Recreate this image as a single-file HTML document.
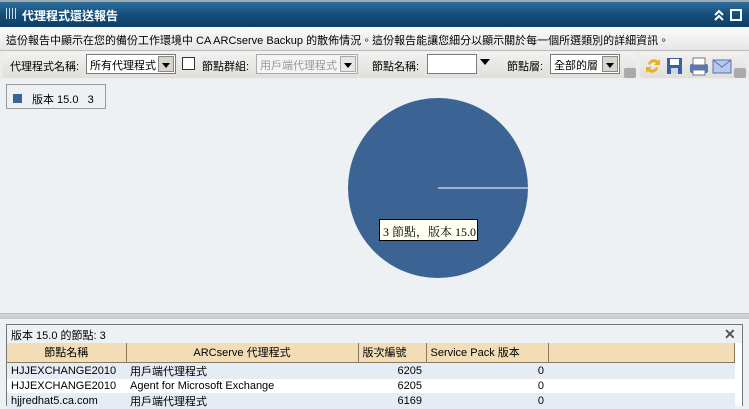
<!DOCTYPE html>
<html><head><meta charset="utf-8"><style>
*{box-sizing:border-box;margin:0;padding:0}
body{width:749px;height:406px;overflow:hidden;background:#eef1f3;font-family:"Liberation Sans","Noto Sans CJK TC",sans-serif;font-size:11px;color:#000;position:relative}
.abs{position:absolute}
.title{left:0;top:0;width:749px;height:27px;background:linear-gradient(180deg,#2d6d9a 0%,#144f7c 50%,#0d3f66 100%);border-top:2px solid #a0a8b0}
.title span{position:absolute;left:22px;top:5px;color:#fff;font-weight:bold;font-size:12px}
.desc{left:0;top:27px;width:749px;height:24px;background:linear-gradient(#fbfbfb,#e6e6e6);border-bottom:1px solid #bbb;padding:5px 0 0 6px;font-size:11px}
.tb{left:0;top:52px;width:749px;height:27px;background:#ececec}
.grp{top:52px;height:26px;background:linear-gradient(#f2f1ef,#e0dfdb);border-radius:3px}
.sel{height:20px;border:1px solid #7a7a7a;background:#fff;padding:2px 3px;font-size:11px}
.arr{position:absolute;right:1px;top:1px;width:16px;height:16px;background:#d8d5cf;border:1px solid #888}
.arr:after{content:"";position:absolute;left:3px;top:6px;border:4px solid transparent;border-top:5px solid #000}
.lbl{font-size:11px;top:58px}
.legend{left:6px;top:84px;width:100px;height:25px;border:1px solid #999;background:#eef1f3;padding:6px 0 0 6px}
table{border-collapse:collapse;font-size:11px}
td,th{height:14px;padding:0 4px;white-space:nowrap}
th{font-weight:normal;background:#f3ddb7;border-right:1px solid #8a7a60;height:19px;border-bottom:1px solid #8a7a60}
</style></head><body>
<div class="abs title">
<svg class="abs" style="left:6px;top:6px" width="10" height="12"><g fill="#cde"><rect x="0" y="0" width="1" height="11"/><rect x="3" y="0" width="1" height="11"/><rect x="6" y="0" width="1" height="11"/><rect x="9" y="0" width="1" height="11"/></g></svg>
<span>代理程式還送報告</span>
<svg class="abs" style="left:714px;top:6px" width="30" height="14"><path d="M1 7l4-4 4 4M1 12l4-4 4 4" stroke="#fff" stroke-width="2" fill="none"/><rect x="17" y="2" width="10" height="10" fill="none" stroke="#fff" stroke-width="2"/></svg>
</div>
<div class="abs desc">這份報告中顯示在您的備份工作環境中 CA ARCserve Backup 的散佈情況。這份報告能讓您細分以顯示關於每一個所選類別的詳細資訊。</div>
<div class="abs tb"></div>
<div class="abs grp" style="left:2px;width:634px"></div>
<div class="abs grp" style="left:640px;width:107px"></div>
<div class="abs lbl" style="left:10px">代理程式名稱:</div>
<div class="abs sel" style="left:86px;top:54px;width:90px">所有代理程式<div class="arr"></div></div>
<div class="abs" style="left:182px;top:57px;width:13px;height:13px;border:1px solid #333;background:#fff"></div>
<div class="abs lbl" style="left:202px">節點群組:</div>
<div class="abs sel" style="left:256px;top:54px;width:102px;color:#999;border-color:#aaa;background:#f4f4f4">用戶端代理程式<div class="arr" style="background:#e6e6e6;border-color:#aaa"></div></div>
<div class="abs lbl" style="left:372px">節點名稱:</div>
<div class="abs sel" style="left:427px;top:54px;width:50px"></div>
<div class="abs" style="left:480px;top:59px;border:5px solid transparent;border-top:6px solid #000"></div>
<div class="abs lbl" style="left:507px">節點層:</div>
<div class="abs sel" style="left:550px;top:54px;width:70px">全部的層<div class="arr"></div></div>
<div class="abs" style="left:624px;top:68px;width:12px;height:10px;background:#aaa;border-radius:2px"></div>
<div class="abs" style="left:734px;top:68px;width:12px;height:10px;background:#aaa;border-radius:2px"></div>
<svg class="abs" style="left:644px;top:56px" width="104" height="20">
<path d="M4 8a6 6 0 0 1 10-3l2-2v6h-6l2-2a4 4 0 0 0-6 2z M14 12a6 6 0 0 1-10 3l-2 2v-6h6l-2 2a4 4 0 0 0 6-2z" fill="#e8b020"/>
<rect x="23" y="2" width="15" height="16" fill="#3a5fa8"/><rect x="26" y="3" width="9" height="6" fill="#fff"/><rect x="27" y="12" width="7" height="6" fill="#d0d8e8"/>
<rect x="46" y="8" width="18" height="9" rx="2" fill="#5a76b8"/><rect x="49" y="2" width="12" height="7" fill="#fff" stroke="#777"/><rect x="49" y="14" width="12" height="5" fill="#fff" stroke="#777"/>
<rect x="69" y="4" width="18" height="13" fill="#b8c8ec" stroke="#5a70b0"/><path d="M69 4l9 7 9-7" stroke="#5a70b0" fill="none"/>
</svg>
<div class="abs legend"><span style="display:inline-block;width:9px;height:9px;background:#3a6294;margin-right:10px"></span>版本 15.0&nbsp;&nbsp;&nbsp;3</div>
<svg class="abs" style="left:340px;top:90px" width="200" height="200"><circle cx="98" cy="98" r="90" fill="#3b6394"/><line x1="98" y1="98" x2="188" y2="98" stroke="#fff" stroke-width="1"/></svg>
<div class="abs" style="left:379px;top:219px;width:99px;height:22px;background:#fffff0;border:1px solid #000;font-family:'Liberation Serif','Noto Serif CJK SC',serif;font-size:12px;padding:3px 0 0 3px">3 節點，版本 15.0</div>
<div class="abs" style="left:0;top:313px;width:749px;height:6px;background:linear-gradient(#d6d6d6,#c8c8c8);border-top:1px solid #bbb"></div>
<div class="abs" style="left:6px;top:324px;width:737px;height:82px;border:1px solid #777;border-bottom:none;background:#fff"></div>
<div class="abs" style="left:7px;top:325px;width:735px;height:18px;background:#eef1f3;padding:2px 0 0 4px">版本 15.0 的節點: 3</div>
<div class="abs" style="left:724px;top:326px;font-size:14px;font-weight:bold;color:#555">✕</div>
<table class="abs" style="left:7px;top:343px;width:728px">
<tr><th style="width:119px">節點名稱</th><th style="width:232px">ARCserve 代理程式</th><th style="width:68px;text-align:left">版次編號</th><th style="width:122px;text-align:left">Service Pack 版本</th><th></th></tr>
<tr style="background:#e6ecf4"><td>HJJEXCHANGE2010</td><td>用戶端代理程式</td><td style="text-align:right">6205</td><td style="text-align:right">0</td><td></td></tr>
<tr style="background:#fff"><td>HJJEXCHANGE2010</td><td>Agent for Microsoft Exchange</td><td style="text-align:right">6205</td><td style="text-align:right">0</td><td></td></tr>
<tr style="background:#e6ecf4"><td>hjjredhat5.ca.com</td><td>用戶端代理程式</td><td style="text-align:right">6169</td><td style="text-align:right">0</td><td></td></tr>
</table>
</body></html>
